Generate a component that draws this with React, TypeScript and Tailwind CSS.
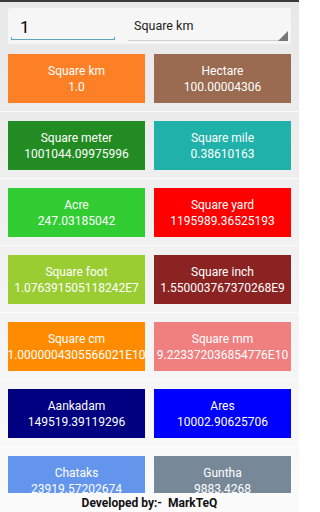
import React from "react";

type Item = { name: string; value: string; bg: string };

const items: Item[] = [
  { name: "Square km", value: "1.0", bg: "bg-[#fd8026]" },
  { name: "Hectare", value: "100.00004306", bg: "bg-[#9a6a51]" },
  { name: "Square meter", value: "1001044.09975996", bg: "bg-[#228b22]" },
  { name: "Square mile", value: "0.38610163", bg: "bg-[#20b2aa]" },
  { name: "Acre", value: "247.03185042", bg: "bg-[#32cd32]" },
  { name: "Square yard", value: "1195989.36525193", bg: "bg-[#ff0000]" },
  { name: "Square foot", value: "1.076391505118242E7", bg: "bg-[#9acd32]" },
  { name: "Square inch", value: "1.550003767370268E9", bg: "bg-[#8b2323]" },
  { name: "Square cm", value: "1.0000004305566021E10", bg: "bg-[#ff8c00]" },
  { name: "Square mm", value: "9.223372036854776E10", bg: "bg-[#f08080]" },
  { name: "Aankadam", value: "149519.39119296", bg: "bg-[#000080]" },
  { name: "Ares", value: "10002.90625706", bg: "bg-[#0000ff]" },
  { name: "Chataks", value: "23919.57202674", bg: "bg-[#6495ed]" },
  { name: "Guntha", value: "9883.4268", bg: "bg-[#778899]" },
];

function Card({ item }: { item: Item }) {
  return (
    <div
      className={`${item.bg} h-[49px] flex flex-col items-center justify-center text-white text-[12px] leading-[16px] whitespace-nowrap overflow-hidden`}
    >
      <div>{item.name}</div>
      <div>{item.value}</div>
    </div>
  );
}

export default function App() {
  const rows: Item[][] = [];
  for (let i = 0; i < items.length; i += 2) rows.push([items[i], items[i + 1]]);
  return (
    <div
      className="w-[299px] h-[512px] overflow-hidden flex flex-col bg-gradient-to-b from-[#e8e8e8] to-[#fbfbfb]"
      style={{ fontFamily: "Roboto, 'Liberation Sans', sans-serif" }}
    >
      <div className="h-[2px] bg-[#3a3a3a] shrink-0" />
      <div className="px-[8px] pt-[6px] shrink-0">
        <div className="h-[36px] bg-[#f6f6f7] rounded-[2px] flex">
          <div className="w-[110px] pl-[3px] flex flex-col justify-end pb-[4px]">
            <div className="pl-[9px] text-[17px] leading-[17px] text-black">1</div>
            <div className="mt-[1px] h-[3px] border-x border-b-[1.5px] border-[#5ba8b5] w-[104px]" />
          </div>
          <div className="flex-1 ml-[10px] mr-[3px] relative flex flex-col">
            <div className="flex-1 flex items-center pl-[6px] pt-[5px] text-[12.5px] text-[#222]">
              Square km
            </div>
            <div className="h-[1px] bg-[#cfcfcf] mb-[3px]" />
            <svg
              className="absolute right-0 bottom-[3px]"
              width="10"
              height="10"
              viewBox="0 0 10 10"
            >
              <polygon points="10,0 10,10 0,10" fill="#777" />
            </svg>
          </div>
        </div>
      </div>
      <div className="flex-1 overflow-hidden pt-[1px]">
        {rows.map((r, i) => (
          <div key={i}>
            <div className="px-[8px] pt-[9px] pb-[8px] grid grid-cols-2 gap-[9px]">
              <Card item={r[0]} />
              <Card item={r[1]} />
            </div>
            <div className="h-[1px] bg-white/80" />
          </div>
        ))}
      </div>
      <div className="h-[19px] shrink-0 bg-[#fbfbfb] flex items-center justify-center text-[12px] font-bold text-[#111] whitespace-pre">
        {"Developed by:-  MarkTeQ"}
      </div>
    </div>
  );
}
